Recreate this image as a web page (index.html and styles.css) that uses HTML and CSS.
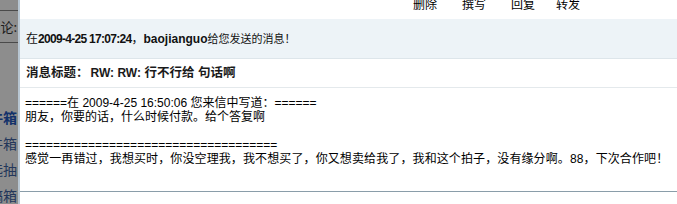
FILE: index.html
```html
<!DOCTYPE html>
<html lang="zh-CN">
<head>
<meta charset="utf-8">
<title>消息</title>
<link rel="stylesheet" href="styles.css">
</head>
<body>
<div class="page">
  <aside class="side">
    <div class="side-top"></div>
    <div class="side-forum"><span>论坛论:</span></div>
    <div class="side-gap"></div>
    <div class="side-item side-current"><span>收件箱</span></div>
    <div class="side-item"><span>发件箱</span></div>
    <div class="side-item"><span>自选抽</span></div>
    <div class="side-item"><span>草稿箱</span></div>
  </aside>
  <main class="main">
    <nav class="toolbar">
      <a class="tool">删除</a>
      <a class="tool">撰写</a>
      <a class="tool">回复</a>
      <a class="tool tool-last">转发</a>
    </nav>
    <div class="info">在<b class="date">2009-4-25 17:07:24</b>，<b>baojianguo</b><span class="small">给您发送的消息！</span></div>
    <h1 class="title">消息标题：<span class="lat">RW: RW:</span> 行不行给 句话啊</h1>
    <div class="body">
      <p class="line">======在 2009-4-25 16:50:06 您来信中写道：======</p>
      <p class="line">朋友，你要的话，什么时候付款。给个答复啊</p>
      <p class="line">&nbsp;</p>
      <p class="line">====================================</p>
      <p class="line line-wide">感觉一再错过，我想买时，你没空理我，我不想买了，你又想卖给我了，我和这个拍子，没有缘分啊。88，下次合作吧！</p>
    </div>
  </main>
</div>
</body>
</html>
```
FILE: styles.css
```css
html, body {
  margin: 0;
  padding: 0;
  background: #ffffff;
}
body {
  font-family: "Liberation Sans", "Noto Sans CJK SC", sans-serif;
  font-size: 12px;
  color: #000;
}
.page {
  display: flex;
  height: 204px;
  overflow: hidden;
}
.side {
  width: 18px;
  flex: none;
  background: #8d8d8d;
  border-right: 2px solid #b8c6d2;
  overflow: hidden;
  display: flex;
  flex-direction: column;
  font-family: "Noto Sans CJK SC", sans-serif;
}
.side-top {
  height: 10px;
  border-bottom: 1px solid #4a4a4a;
  flex: none;
}
.side-forum {
  height: 31px;
  border-bottom: 1px solid #4a4a4a;
  display: flex;
  justify-content: flex-end;
  align-items: center;
  white-space: nowrap;
  color: #1b1b1b;
  font-size: 13px;
  padding-right: 1px;
  flex: none;
}
.side-gap {
  height: 61px;
  flex: none;
}
.side-item {
  height: 26px;
  display: flex;
  justify-content: flex-end;
  align-items: center;
  white-space: nowrap;
  color: #23365a;
  font-size: 14px;
  padding-right: 1px;
  flex: none;
}
.side-current {
  font-weight: bold;
  color: #12316a;
}
.main {
  flex: 1;
  display: flex;
  flex-direction: column;
}
.toolbar {
  height: 19px;
  display: flex;
  gap: 25px;
  padding-left: 393px;
  flex: none;
  font-family: "Noto Sans CJK SC", sans-serif;
}
.tool {
  line-height: 12px;
  margin-top: -2px;
  color: #000;
  text-decoration: none;
}
.tool-last {
  margin-left: -4px;
}
.info {
  height: 39px;
  line-height: 40px;
  background: #edf3f7;
  border-bottom: 1px solid #dde5ea;
  padding-left: 6px;
  color: #111;
  flex: none;
}
.info b {
  font-weight: bold;
}
.date {
  letter-spacing: -0.7px;
}
.small {
  font-size: 11px;
}
.title {
  margin: 0;
  height: 28px;
  line-height: 28px;
  font-size: 12.5px;
  font-weight: bold;
  padding-left: 6px;
  border-bottom: 1px solid #e4e9ec;
  color: #1a1a1a;
  flex: none;
}
.lat {
  font-size: 12px;
  margin-left: 2px;
}
.body {
  height: 95px;
  padding: 8px 0 0 5px;
  border-bottom: 1px solid #8a9da9;
  flex: none;
}
.line {
  margin: 0;
  line-height: 14px;
  white-space: nowrap;
}
.line-wide {
  letter-spacing: 0.11px;
}
```
